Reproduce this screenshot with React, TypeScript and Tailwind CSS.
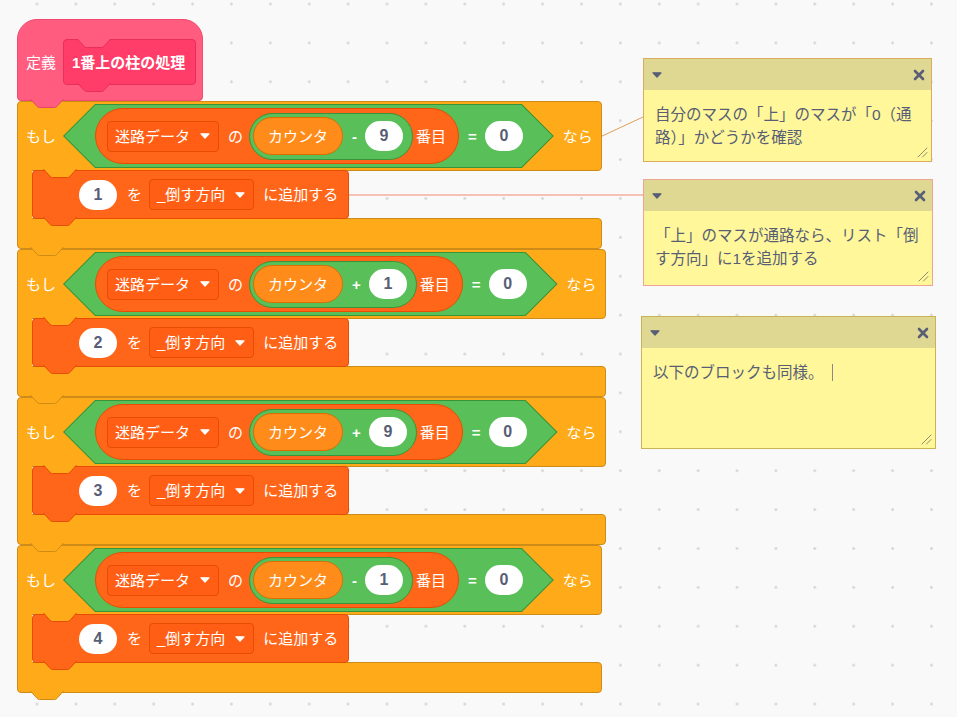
import React from "react";

// Tab-shaped connector drawn below a block (or inside a notch).
function Bump({ fill, stroke, className }: { fill: string; stroke: string; className: string }) {
  return (
    <svg width="34" height="10" viewBox="0 0 34 10" className={"absolute " + className}>
      <path
        d="M0.5 0 L7 7.3 Q8 8.5 9.5 8.5 H24.5 Q26 8.5 27 7.3 L33.5 0"
        fill={fill}
        stroke={stroke}
        strokeWidth="1"
      />
    </svg>
  );
}

function Caret({ color = "#ffffff" }: { color?: string }) {
  return (
    <svg width="10" height="6" viewBox="0 0 10 6" className="shrink-0">
      <path d="M1 0.8 H9 L5 5.2 Z" fill={color} stroke={color} strokeWidth="1.2" strokeLinejoin="round" />
    </svg>
  );
}

function NumPill({ v }: { v: string }) {
  return (
    <div className="h-[30px] w-[38px] rounded-full bg-white flex items-center justify-center text-[#575e75] font-bold text-[16px] leading-none">
      {v}
    </div>
  );
}

function Dropdown({ label }: { label: string }) {
  return (
    <div className="h-[31px] flex items-center gap-[10px] pl-[7px] pr-[8px] rounded-[4px] bg-[#ff5e14] border border-[#e64d00]">
      <span>{label}</span>
      <Caret />
    </div>
  );
}

function Hex({ children }: { children: React.ReactNode }) {
  return (
    <div className="relative ml-[7px] flex items-center h-[64px] pl-[32px] pr-[31px]">
      <div className="absolute inset-0 bg-[#389438] [clip-path:polygon(32px_0,calc(100%_-_32px)_0,100%_50%,calc(100%_-_32px)_100%,32px_100%,0_50%)]" />
      <div className="absolute inset-0 bg-[#59c059] [clip-path:polygon(32.5px_1px,calc(100%_-_32.5px)_1px,calc(100%_-_1.5px)_50%,calc(100%_-_32.5px)_calc(100%_-_1px),32.5px_calc(100%_-_1px),1.5px_50%)]" />
      <div className="relative flex items-center">{children}</div>
    </div>
  );
}

function ItemOf({ op, n }: { op: string; n: string }) {
  return (
    <div className="h-[56px] flex items-center pl-[11px] pr-[12px] rounded-full bg-[#ff661a] border border-[#e64d00]">
      <Dropdown label="迷路データ" />
      <span className="ml-[9px]">の</span>
      <div className="ml-[6px] h-[47px] flex items-center pl-[3px] pr-[9px] rounded-full bg-[#59c059] border border-[#389438]">
        <div className="h-[38px] flex items-center px-[14px] rounded-full bg-[#ff8c1a] border border-[#db6e00]">
          カウンタ
        </div>
        <span className="ml-[9px] mr-[8px] font-bold">{op}</span>
        <NumPill v={n} />
      </div>
      <span className="ml-[3px]">番目</span>
    </div>
  );
}

function AddToList({ v }: { v: string }) {
  return (
    <div className="relative h-[49px] flex items-center pl-[46px] pr-[10px] rounded-[4px] bg-[#ff661a] border border-[#e64d00]">
      <NumPill v={v} />
      <span className="ml-[10px]">を</span>
      <div className="ml-[7px]">
        <Dropdown label="_倒す方向" />
      </div>
      <span className="ml-[9px]">に追加する</span>
      <Bump fill="#ff661a" stroke="#e64d00" className="left-[10px] top-[calc(100%_-_1px)] z-[3]" />
    </div>
  );
}

function IfBlock({ op, n, item }: { op: string; n: string; item: string }) {
  return (
    <div className="relative flex flex-col">
      <div className="relative flex items-center h-[70px] pl-[8px] pr-[8px] bg-[#ffab19] border border-[#cf8b17] rounded-t-[4px] rounded-br-[4px]">
        <span>もし</span>
        <Hex>
          <ItemOf op={op} n={n} />
          <span className="ml-[9px] font-bold">=</span>
          <div className="ml-[8px]">
            <NumPill v="0" />
          </div>
        </Hex>
        <span className="ml-[9px]">なら</span>
        <Bump fill="#ffab19" stroke="#e64d00" className="left-[25px] top-[calc(100%_-_1px)] z-[3]" />
      </div>
      <div className="relative z-[1] -my-px flex">
        <div className="w-[15px] bg-[#ffab19] border-l border-[#cf8b17]" />
        <AddToList v={item} />
      </div>
      <div className="relative h-[31px] bg-[#ffab19] border border-[#cf8b17] rounded-b-[4px] rounded-tr-[4px]">
        <Bump fill="#ffab19" stroke="#cf8b17" className="left-[12px] top-[calc(100%_-_1px)] z-[3]" />
      </div>
    </div>
  );
}

function DefineHat() {
  return (
    <div className="relative w-fit h-[82px] flex items-start pt-[19px] pl-[8px] pr-[6px] bg-[#ff5c80] border border-[#f04a6e] rounded-t-[20px] rounded-b-[4px]">
      <div className="flex items-center h-[46px]">
        <span>定義</span>
        <div className="relative ml-[7px] h-[46px] flex items-center pl-[8px] pr-[10px] rounded-[4px] bg-[#ff3d68] border border-[#e6305a] font-bold">
          1番上の柱の処理
          <Bump fill="#ff5c80" stroke="#e6305a" className="left-[13px] -top-px" />
          <Bump fill="#ff3d68" stroke="#e6305a" className="left-[13px] top-[calc(100%_-_1px)]" />
        </div>
      </div>
      <Bump fill="#ff5c80" stroke="#e64569" className="left-[12px] top-[calc(100%_-_1px)] z-[3]" />
    </div>
  );
}

function CloseIcon() {
  return (
    <svg width="12" height="12" viewBox="0 0 12 12">
      <path d="M2 2 L10 10 M10 2 L2 10" stroke="#575e75" strokeWidth="2.6" strokeLinecap="round" />
    </svg>
  );
}

function Grip() {
  return (
    <svg width="12" height="12" viewBox="0 0 12 12" className="absolute right-[3px] bottom-[3px]">
      <path d="M11 2 L2 11 M11 6.5 L6.5 11" stroke="#8f8c6e" strokeWidth="1" strokeLinecap="round" />
    </svg>
  );
}

function Comment({
  box,
  children,
}: {
  box: string;
  children: React.ReactNode;
}) {
  return (
    <div className={"absolute z-[5] flex flex-col border " + box}>
      <div className="h-[31px] shrink-0 flex items-center justify-between pl-[8px] pr-[6px] bg-[#dfd892]">
        <Caret color="#575e75" />
        <CloseIcon />
      </div>
      <div className="relative flex-1 bg-[#fff799] pl-[11px] pt-[13px] text-[15.5px] leading-[23px] text-[#575e75]">
        {children}
        <Grip />
      </div>
    </div>
  );
}

export default function App() {
  return (
    <div className="relative w-[957px] h-[717px] overflow-hidden bg-[#f9f9f9] bg-[radial-gradient(circle,#d6d6d6_1px,transparent_1.6px)] bg-[length:38.9px_38.9px] bg-[position:17.55px_-15.45px] [font-family:'Liberation_Sans','Noto_Sans_CJK_JP',sans-serif]">
      {/* comment connectors */}
      <svg width="957" height="717" className="absolute inset-0 pointer-events-none">
        <line x1="600" y1="137" x2="643" y2="117" stroke="#e0a058" strokeWidth="1" />
        <line x1="348" y1="195" x2="643" y2="195" stroke="#f28a72" strokeWidth="1" />
      </svg>

      <div className="relative z-[1] pl-[17px] pt-[19px] text-white text-[15px] leading-none font-normal">
        <div className="flex flex-col items-start">
          <DefineHat />
          <IfBlock op="-" n="9" item="1" />
          <IfBlock op="+" n="1" item="2" />
          <IfBlock op="+" n="9" item="3" />
          <IfBlock op="-" n="1" item="4" />
        </div>
      </div>

      <Comment box="left-[643px] top-[58px] w-[289px] h-[104px] border-[#dcab62]">
        自分のマスの「上」のマスが「0（通
        <br />
        路）」かどうかを確認
      </Comment>
      <Comment box="left-[643px] top-[179px] w-[290px] h-[107px] border-[#eea594]">
        「上」のマスが通路なら、リスト「倒
        <br />
        す方向」に1を追加する
      </Comment>
      <Comment box="left-[641px] top-[316px] w-[295px] h-[133px] border-[#c9b352]">
        <span>以下のブロックも同様。</span>
        <span className="inline-block ml-[8px] w-px h-[17px] bg-[#8a8a8a] align-[-3px]" />
      </Comment>
    </div>
  );
}
